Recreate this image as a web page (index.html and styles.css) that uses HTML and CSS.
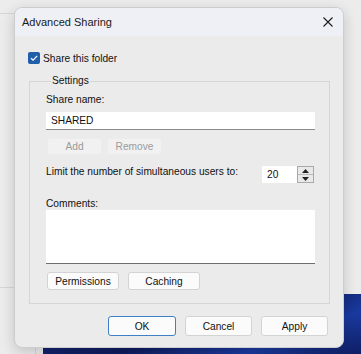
FILE: index.html
```html
<!DOCTYPE html>
<html lang="en">
<head>
    <meta charset="UTF-8">
    <title>Advanced Sharing</title>
    <link rel="stylesheet" href="styles.css">
</head>
<body>
    <!-- Desktop behind the dialog -->
    <div class="desktop">
        <div class="wallpaper"></div>
        <div class="line line-a"></div>
        <div class="line line-b"></div>
        <div class="line line-c"></div>

        <!-- Dialog window -->
        <div class="window">
            <div class="titlebar">
                <span class="title">Advanced Sharing</span>
                <svg class="close" width="12" height="12" viewBox="0 0 12 12">
                    <path d="M1.5 1.5 L10.5 10.5 M10.5 1.5 L1.5 10.5" stroke="#1c1c1c" stroke-width="1.1" fill="none"/>
                </svg>
            </div>

            <div class="content">
                <div class="check-row">
                    <span class="checkbox">
                        <svg width="12" height="12" viewBox="0 0 12 12">
                            <path d="M3 6.2 L5.1 8.2 L9.2 3.8" stroke="#fff" stroke-width="1.2" fill="none"/>
                        </svg>
                    </span>
                    <span>Share this folder</span>
                </div>

                <fieldset class="group">
                    <legend>Settings</legend>
                    <div class="label">Share name:</div>
                    <div class="field">SHARED</div>
                    <div class="btn-row">
                        <div class="btn disabled">Add</div>
                        <div class="btn disabled">Remove</div>
                    </div>
                    <div class="limit-row">
                        <span class="limit-text">Limit the number of simultaneous users to:</span>
                        <div class="spinner">
                            <div class="spin-value">20</div>
                            <div class="spin-arrows">
                                <div class="arrow"><svg width="7" height="4" viewBox="0 0 7 4"><path d="M0 4 L3.5 0 L7 4 Z" fill="#222"/></svg></div>
                                <div class="arrow"><svg width="7" height="4" viewBox="0 0 7 4"><path d="M0 0 L3.5 4 L7 0 Z" fill="#222"/></svg></div>
                            </div>
                        </div>
                    </div>
                    <div class="label comments">Comments:</div>
                    <div class="textarea"></div>
                    <div class="btn-row lower">
                        <div class="btn wide">Permissions</div>
                        <div class="btn wide">Caching</div>
                    </div>
                </fieldset>

                <div class="actions">
                    <div class="btn action primary">OK</div>
                    <div class="btn action">Cancel</div>
                    <div class="btn action">Apply</div>
                </div>
            </div>
        </div>
    </div>
</body>
</html>
```

FILE: styles.css
```css
/* General */
* {
    box-sizing: border-box;
}

body {
    margin: 0;
    font-family: 'Liberation Sans', Arial, sans-serif;
    font-size: 10.2px;
    color: #111;
    background: #ebebeb;
    overflow: hidden;
}

/* Desktop background */
.desktop {
    position: relative;
    width: 361px;
    height: 354px;
    padding: 7px 0 0 14px;
    background: #ececec;
    overflow: hidden;
}

.wallpaper {
    position: absolute;
    left: 43px;
    top: 294px;
    width: 330px;
    height: 70px;
    background: linear-gradient(160deg, #1b2f86 0%, #0f1b5c 45%, #1a3aa0 70%, #0c1550 100%);
}

.line {
    position: absolute;
    background: #d6d6d6;
}

.line-a {
    left: 0;
    top: 13px;
    width: 14px;
    height: 1px;
}

.line-b {
    left: 0;
    top: 287px;
    width: 14px;
    height: 1px;
}

.line-c {
    left: 35px;
    top: 344px;
    width: 1px;
    height: 10px;
}

/* Dialog window */
.window {
    position: relative;
    width: 330px;
    height: 341px;
    background: #ebebeb;
    border: 1px solid #cdcdcd;
    border-radius: 8px;
    box-shadow: 0 4px 14px rgba(0, 0, 0, 0.18);
    overflow: hidden;
}

.titlebar {
    height: 28px;
    display: flex;
    align-items: center;
    justify-content: space-between;
    padding: 0 8px 0 7px;
    background: #eef0f5;
}

.title {
    font-size: 11px;
    color: #1a1a1a;
}

.close {
    margin-right: 1px;
}

.content {
    padding: 15px 0 0 13px;
}

/* Checkbox */
.check-row {
    display: flex;
    align-items: center;
    gap: 3px;
    height: 14px;
}

.checkbox {
    display: flex;
    width: 12px;
    height: 12px;
    border-radius: 2px;
    background: #1f5ea9;
}

/* Settings group */
.group {
    margin: 9px 0 0 1px;
    width: 301px;
    padding: 5px 13px 13px 16px;
    border: 1px solid #d5d5d5;
    border-radius: 0;
}

.group legend {
    padding: 0 1px;
    margin-left: 5px;
    line-height: 14px;
}

.label {
    line-height: 14px;
}

.field {
    width: 269px;
    height: 18px;
    margin: 5px 0 0 0;
    padding-left: 5px;
    background: #fff;
    border-bottom: 1px solid #8a8a8a;
    line-height: 18px;
}

.btn-row {
    display: flex;
    gap: 5px;
    margin: 8px 0 0 1px;
}

.btn {
    display: flex;
    align-items: center;
    justify-content: center;
    height: 18px;
    background: #fbfbfb;
    border: 1px solid #d3d3d3;
    border-radius: 3px;
}

.btn.disabled {
    width: 55px;
    height: 17px;
    background: #f1f1f1;
    border-color: #ececec;
    color: #9b9b9b;
}

.btn-row.lower {
    gap: 9px;
}

.btn.wide {
    width: 72px;
}

/* Limit row */
.limit-row {
    display: flex;
    justify-content: space-between;
    margin-top: 11px;
    width: 268px;
}

.limit-text {
    line-height: 14px;
    margin-top: -1px;
    white-space: nowrap;
}

.spinner {
    display: flex;
    width: 52px;
    height: 17px;
}

.spin-value {
    flex: 1;
    background: #fff;
    padding-left: 5px;
    line-height: 17px;
}

.spin-arrows {
    display: flex;
    flex-direction: column;
    width: 17px;
    border: 1px solid #a9a9a9;
    background: #e9e9e9;
}

.arrow {
    flex: 1;
    display: flex;
    align-items: center;
    justify-content: center;
}

.arrow + .arrow {
    border-top: 1px solid #b9b9b9;
}

.comments {
    margin-top: 14px;
    line-height: 13px;
}

.textarea {
    width: 269px;
    height: 54px;
    background: #fff;
    border-bottom: 1px solid #6f6f6f;
}

/* Bottom buttons */
.actions {
    display: flex;
    justify-content: flex-end;
    gap: 9px;
    margin: 12px 15px 0 0;
}

.btn.action {
    width: 67px;
    height: 20px;
}

.btn.primary {
    width: 68px;
    border-color: #3f7fc6;
}
```
